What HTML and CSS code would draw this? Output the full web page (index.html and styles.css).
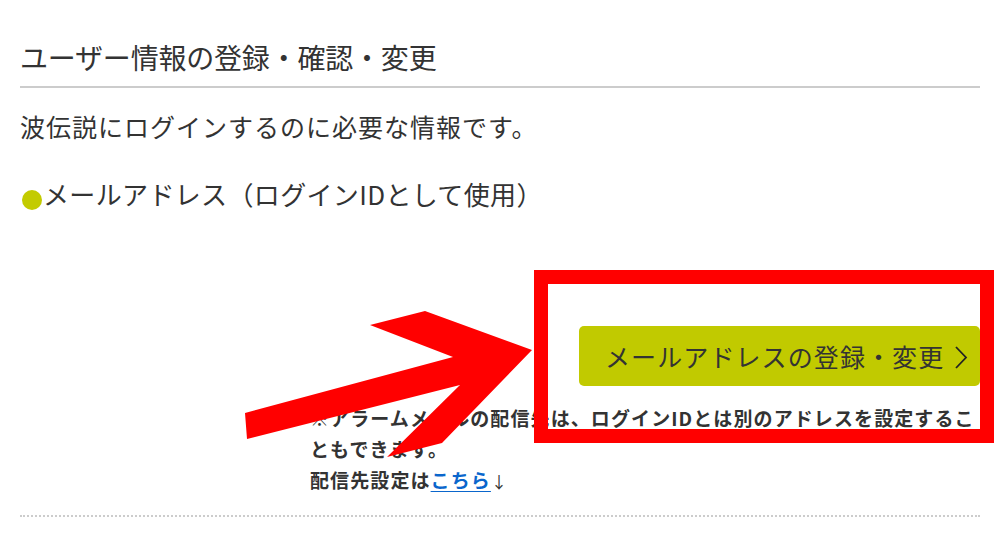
FILE: index.html
```html
<!DOCTYPE html>
<html lang="ja">
<head>
<meta charset="utf-8">
<link rel="stylesheet" href="styles.css">
</head>
<body>
<div class="page">
  <h2 class="title">ユーザー情報の登録・確認・変更</h2>
  <p class="lead">波伝説にログインするのに必要な情報です。</p>
  <h3 class="item"><span class="dot"></span>メールアドレス（ログインIDとして使用）</h3>
  <div class="actions">
    <a class="btn" href="#"><span>メールアドレスの登録・変更</span><svg class="chev" width="16" height="24" viewBox="0 0 16 24"><path d="M3 2 L13 12.5 L3 23" fill="none" stroke="#222" stroke-width="1.8"/></svg></a>
  </div>
  <div class="notes">
    <p>※アラームメールの配信先は、ログインIDとは別のアドレスを設定することもできます。</p>
    <p>配信先設定は<a class="link" href="#">こちら</a><span class="down">↓</span></p>
  </div>
  <div class="dotted"></div>
</div>
<div class="redbox"></div>
<svg class="arrow" width="1000" height="539" viewBox="0 0 1000 539">
  <polygon points="247,439 245,413 453,357 370,325 425,311 532,350 442,443 387,457 460,385" fill="#ff0000"/>
</svg>
</body>
</html>
```
FILE: styles.css
```css
html, body {
  margin: 0;
  padding: 0;
  background: #fff;
}
body {
  font-family: "Noto Sans CJK JP", "Noto Sans", sans-serif;
  color: #333;
  position: relative;
  width: 1000px;
  height: 539px;
  overflow: hidden;
}
.page {
  padding: 38px 20px 0 20px;
}
.title {
  margin: 0;
  font-size: 28px;
  font-weight: normal;
  line-height: 38px;
  padding-bottom: 10px;
  border-bottom: 2px solid #cccccc;
  letter-spacing: -0.2px;
}
.lead {
  margin: 18px 0 0 0;
  font-size: 25px;
  line-height: 40px;
  letter-spacing: 1px;
}
.item {
  margin: 28px 0 0 0;
  font-size: 26px;
  font-weight: normal;
  line-height: 40px;
  display: flex;
  align-items: center;
  letter-spacing: 0.35px;
}
.dot {
  width: 20px;
  height: 20px;
  border-radius: 50%;
  background: #c3cb00;
  margin: 12px 1px 0 2px;
  flex: none;
}
.actions {
  display: flex;
  justify-content: flex-end;
  margin-top: 112px;
}
.btn {
  display: flex;
  align-items: center;
  gap: 9px;
  width: 401px;
  height: 60px;
  box-sizing: border-box;
  padding: 0 0 0 26px;
  background: #c1ca00;
  border-radius: 5px;
  color: #333;
  text-decoration: none;
  font-size: 25px;
  letter-spacing: 1.1px;
}
.chev {
  margin-top: 2px;
}
.notes {
  margin: 16px 0 0 290px;
  font-size: 19px;
  font-weight: bold;
  line-height: 31px;
  letter-spacing: 1.1px;
}
.notes p {
  margin: 0;
}
.link {
  color: #0a66cc;
  text-decoration: underline;
  text-underline-offset: 3px;
}
.down {
  font-size: 16px;
  font-weight: normal;
}
.dotted {
  margin-top: 18px;
  border-top: 2px dotted #cccccc;
}
.redbox {
  position: absolute;
  left: 534px;
  top: 270px;
  width: 432px;
  height: 145px;
  border: 14px solid #ff0000;
}
.arrow {
  position: absolute;
  left: 0;
  top: 0;
}
```
